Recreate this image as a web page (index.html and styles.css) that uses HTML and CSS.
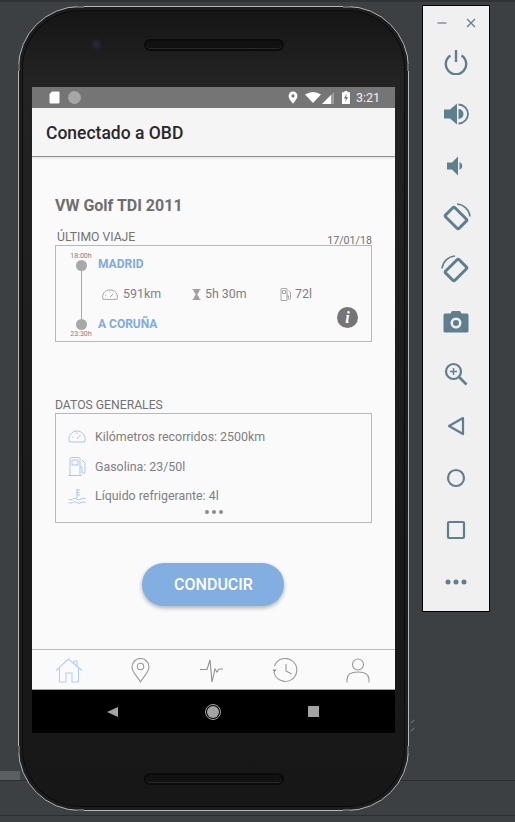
FILE: index.html
```html
<!DOCTYPE html>
<html lang="es">
<head>
  <meta charset="UTF-8">
  <title>Conectado a OBD</title>
  <link rel="stylesheet" href="styles.css">
</head>
<body>
  <div class="phone">
    <span class="tick tick-tl"></span><span class="tick tick-tr"></span>
    <span class="tick tick-sl"></span><span class="tick tick-sr"></span>
    <span class="tick tick-bl"></span><span class="tick tick-br"></span>
    <span class="tick tick-lsl"></span><span class="tick tick-lsr"></span>
    <span class="scratch scratch-a"></span><span class="scratch scratch-b"></span>
    <div class="bezel-top">
      <span class="camera"></span>
      <span class="speaker"></span>
    </div>
    <div class="screen">
      <div class="status-bar">
        <div class="status-left">
          <svg width="11" height="13" viewBox="0 0 11 13"><path d="M3 0.500h6.500a1 1 0 0 1 1 1v10a1 1 0 0 1-1 1h-8a1 1 0 0 1-1-1V3z" fill="#fff"/></svg>
          <span class="status-dot"></span>
        </div>
        <div class="status-right">
          <svg width="10" height="13" viewBox="0 0 10 13"><path fill-rule="evenodd" d="M5 0.500a4.400 4.400 0 0 1 4.400 4.400C9.400 8 5 12.500 5 12.500S0.600 8 0.600 4.900A4.400 4.400 0 0 1 5 0.500zM5 3.300a1.600 1.600 0 1 0 0 3.200a1.600 1.600 0 0 0 0-3.200z" fill="#fff"/></svg>
          <svg class="wifi" width="16" height="11" viewBox="0 0 16 11"><path d="M0 2.500Q8-2.500 16 2.500L8 11z" fill="#fff"/></svg>
          <svg class="signal" width="12" height="12" viewBox="0 0 12 12"><path d="M12 0V12H0z" fill="#9e9e9e"/><path d="M9 3V12H0z" fill="#fff"/></svg>
          <svg class="battery" width="8" height="13" viewBox="0 0 8 13"><path d="M2.500 0h3v1.200h2.500v11.800h-8v-11.800h2.500z" fill="#fff"/><path d="M4.600 2.500L2 7.500h1.800L3.200 11l2.800-5h-1.800z" fill="#757575"/></svg>
          <span class="clock">3:21</span>
        </div>
      </div>
      <header class="app-bar">Conectado a OBD</header>
      <main class="content">
        <h2 class="car-name">VW Golf TDI 2011</h2>

        <div class="section-head head-trip">
          <span class="section-title">ÚLTIMO VIAJE</span>
          <span class="trip-date">17/01/18</span>
        </div>
        <section class="card trip-card">
          <div class="timeline">
            <span class="time">18:00h</span>
            <span class="dot"></span>
            <span class="line"></span>
            <span class="dot"></span>
            <span class="time">23:30h</span>
          </div>
          <div class="trip-body">
            <div class="city">MADRID</div>
            <div class="trip-stats">
              <div class="stat stat-km">
                <svg width="16" height="11" viewBox="0 0 16 11" fill="none" stroke="#9e9e9e" stroke-width="0.900"><path d="M1 10.400A7 7 0 0 1 8 1a7 7 0 0 1 7 9.400z"/><path d="M8 8l3-3"/><path d="M3 6l1 .5M8 2.500v1"/></svg>
                <span>591km</span>
              </div>
              <div class="stat stat-time">
                <svg width="9" height="11" viewBox="0 0 9 11"><path d="M0.500 0h8v1H7.500C7.500 3.500 5.300 4.500 5.300 5.500S7.500 7.500 7.500 10h1v1h-8v-1h1C1.500 7.500 3.700 6.500 3.700 5.500S1.500 3.500 1.500 1h-1z" fill="#a0a0a0"/></svg>
                <span>5h 30m</span>
              </div>
              <div class="stat stat-fuel">
                <svg width="12" height="13" viewBox="0 0 12 13" fill="none" stroke="#9e9e9e" stroke-width="0.900"><path d="M1 12.500V1a.5.5 0 0 1 .5-.5h5A.5.5 0 0 1 7 1v11.500z"/><path d="M2.500 2.500h3v3h-3z"/><path d="M7 8h1.500v2.500a1 1 0 0 0 2 0V4.500L8.500 2.500"/></svg>
                <span>72l</span>
              </div>
            </div>
            <div class="city">A CORUÑA</div>
          </div>
          <span class="info">i</span>
        </section>

        <div class="section-head head-data">
          <span class="section-title">DATOS GENERALES</span>
        </div>
        <section class="card data-card">
          <div class="data-row">
            <svg width="18" height="13" viewBox="0 0 18 13" fill="none" stroke="#a9c7ec" stroke-width="1"><path d="M1.500 12A8 8 0 0 1 9 1a8 8 0 0 1 7.500 11z"/><path d="M9 9l3.500-4"/><path d="M4 7l1 .5M9 2.500v1.500"/></svg>
            <span>Kilómetros recorridos: 2500km</span>
          </div>
          <div class="data-row">
            <svg width="18" height="19" viewBox="0 0 18 19" fill="none" stroke="#a9c7ec" stroke-width="1"><path d="M2 18.500V2a1.500 1.500 0 0 1 1.500-1.500h7A1.500 1.500 0 0 1 12 2v16.500zM0.500 18.500H13.500"/><path d="M4 3h6v5H4z"/><path d="M12 10h2v5a1.500 1.500 0 0 0 3 0V6l-3-3"/></svg>
            <span>Gasolina: 23/50l</span>
          </div>
          <div class="data-row">
            <svg width="18" height="16" viewBox="0 0 18 16" fill="none" stroke="#a9c7ec" stroke-width="1"><path d="M9 0.500v10M9 2h3M9 4.500h2.500M9 7h3"/><path d="M0.500 11q2 2 4 0t4 0t4.500 0t4.500 0"/><path d="M0.500 14.500q2 1.500 4 0t4 0t4.500 0t4.500 0"/></svg>
            <span>Líquido refrigerante: 4l</span>
          </div>
          <div class="more-dots"><i></i><i></i><i></i></div>
        </section>

        <div class="action">
          <button class="drive-button">CONDUCIR</button>
        </div>
      </main>
      <nav class="tabs">
        <svg width="28" height="25" viewBox="0 0 28 25" fill="none" stroke="#b4d0f1" stroke-width="1.100"><path d="M1 12.500L13.500 1 27 12.500"/><path d="M19 6V3h3v6"/><path d="M4.500 10v14H11v-9h6v9h6.500V10"/></svg>
        <svg width="19" height="25" viewBox="0 0 19 25" fill="none" stroke="#9a9a9a" stroke-width="1.100"><path d="M9.500 24C6 18 1 14 1 9a8.500 8.500 0 0 1 17 0C18 14 13 18 9.500 24z"/><circle cx="9.500" cy="8.500" r="3.200"/></svg>
        <svg width="26" height="24" viewBox="0 0 26 24" fill="none" stroke="#8f8f8f" stroke-width="1.100"><path d="M2 10.500h7L12 1l2 22 3-13 2 3 2-3h4"/></svg>
        <svg width="26" height="25" viewBox="0 0 26 25" fill="none" stroke="#9a9a9a" stroke-width="1.100"><path d="M2.500 8A11.500 11.500 0 1 1 2 14"/><path d="M14 6v7l5.500 3"/><path d="M0.500 11.500h4L2.500 14.500z" fill="#8a8a8a" stroke="none"/></svg>
        <svg width="24" height="25" viewBox="0 0 24 25" fill="none" stroke="#9a9a9a" stroke-width="1.100"><circle cx="12" cy="6.500" r="5.500"/><path d="M1 24.500v-3c0-5 4-7.500 11-7.500s11 2.500 11 7.500v3"/></svg>
      </nav>
      <div class="nav-bar">
        <span class="nav-back"></span>
        <span class="nav-home"><i></i></span>
        <span class="nav-square"></span>
      </div>
    </div>
    <div class="bezel-bottom">
      <span class="speaker"></span>
    </div>
  </div>

  <aside class="tool-panel">
    <div class="panel-head">
      <svg width="10" height="10" viewBox="0 0 10 10"><path d="M0.500 5h9" stroke="#5f7f8f" stroke-width="1.200"/></svg>
      <svg width="10" height="10" viewBox="0 0 10 10"><path d="M1 1l8 8M9 1l-8 8" stroke="#5f7f8f" stroke-width="1.200"/></svg>
    </div>
    <div class="tool">
      <svg width="26" height="26" viewBox="0 0 26 26" fill="none" stroke="#5f7f8f" stroke-width="2.400"><path d="M7.500 6.500a10.200 10.200 0 1 0 11 0"/><path d="M13 1v12"/></svg>
    </div>
    <div class="tool">
      <svg width="26" height="24" viewBox="0 0 26 24"><path d="M1 7.500h6L14 1.500v21l-7-6H1z" fill="#5f7f8f"/><path d="M15.500 7a5 5 0 0 1 0 10z" fill="#5f7f8f"/><path d="M15.500 2.500a9.500 9.500 0 0 1 0 19" fill="none" stroke="#5f7f8f" stroke-width="1.800"/></svg>
    </div>
    <div class="tool">
      <svg width="20" height="20" viewBox="0 0 20 20"><path d="M1 6.500h5L12 0.500v19l-6-6H1z" fill="#5f7f8f"/><path d="M13.500 6a4.300 4.300 0 0 1 0 8z" fill="#5f7f8f"/></svg>
    </div>
    <div class="tool">
      <svg width="30" height="30" viewBox="0 0 30 30" fill="none" stroke="#5f7f8f"><rect x="5.500" y="8.500" width="19" height="13" rx="1.500" stroke-width="3" transform="rotate(45 15 15)"/><path d="M16 1a14 14 0 0 1 13 12.500" stroke-width="1.500"/></svg>
    </div>
    <div class="tool">
      <svg width="30" height="30" viewBox="0 0 30 30" fill="none" stroke="#5f7f8f"><rect x="5.500" y="8.500" width="19" height="13" rx="1.500" stroke-width="3" transform="rotate(-45 15 15)"/><path d="M14 1a14 14 0 0 0-13 12.500" stroke-width="1.500"/></svg>
    </div>
    <div class="tool">
      <svg width="26" height="24" viewBox="0 0 26 24"><path fill-rule="evenodd" d="M2 3.500h5.500L9 1h8l1.500 2.500H24a1.500 1.500 0 0 1 1.500 1.500v16a1.500 1.500 0 0 1-1.500 1.500H2A1.500 1.500 0 0 1 .5 21V5A1.500 1.500 0 0 1 2 3.500zM13 7.500a5.500 5.500 0 1 0 0 11a5.500 5.500 0 0 0 0-11zM13 10a3 3 0 1 1 0 6a3 3 0 0 1 0-6z" fill="#5f7f8f"/></svg>
    </div>
    <div class="tool">
      <svg width="24" height="24" viewBox="0 0 24 24" fill="none" stroke="#5f7f8f" stroke-width="2.200"><circle cx="9.500" cy="9.500" r="7.500"/><path d="M15 15l7.500 7.500" stroke-width="2.600"/><path d="M9.500 6v7M6 9.500h7" stroke-width="1.400"/></svg>
    </div>
    <div class="tool">
      <svg width="18" height="20" viewBox="0 0 18 20" fill="none" stroke="#5f7f8f" stroke-width="2.200" stroke-linejoin="round"><path d="M16 2L2 10l14 8z"/></svg>
    </div>
    <div class="tool">
      <svg width="20" height="20" viewBox="0 0 20 20" fill="none" stroke="#5f7f8f" stroke-width="2.200"><circle cx="10" cy="10" r="8"/></svg>
    </div>
    <div class="tool">
      <svg width="20" height="20" viewBox="0 0 20 20" fill="none" stroke="#5f7f8f" stroke-width="2.200"><rect x="2" y="2" width="16" height="16" rx="1"/></svg>
    </div>
    <div class="tool">
      <svg width="22" height="6" viewBox="0 0 22 6" fill="#5f7f8f"><circle cx="3" cy="3" r="2.500"/><circle cx="11" cy="3" r="2.500"/><circle cx="19" cy="3" r="2.500"/></svg>
    </div>
  </aside>
</body>
</html>
```

FILE: styles.css
```css
body {
  margin: 0;
  width: 515px;
  height: 822px;
  overflow: hidden;
  box-sizing: border-box;
  padding: 6px 0 0 18px;
  display: flex;
  align-items: flex-start;
  font-family: Roboto, "Liberation Sans", sans-serif;
  background-color: #3c4043;
  background-image:
    linear-gradient(#2f3336, #2f3336),
    linear-gradient(#5c5f61, #5c5f61),
    linear-gradient(#2b2e30, #2b2e30),
    linear-gradient(#2b2e30, #2b2e30);
  background-repeat: no-repeat;
  background-size: 515px 2px, 20px 9px, 515px 1px, 515px 1px;
  background-position: 0 0, 0 771px, 0 780px, 0 815px;
}

/* telefono */
.phone {
  position: relative;
  width: 391px;
  height: 805px;
  box-sizing: border-box;
  padding: 0 13px;
  display: flex;
  flex-direction: column;
  flex-shrink: 0;
  border-radius: 62px;
  background: linear-gradient(#141414, #232323 9%, #1b1b1b 60%, #171717);
  border: 1px solid #b5b8ba;
  box-shadow: inset 0 0 0 3px #1d1d1d, inset 0 0 0 4px #0c0c0c;
}
.tick {
  position: absolute;
  background: #5e6265;
}
.tick-tl, .tick-tr, .tick-bl, .tick-br {
  width: 7px;
  height: 2px;
}
.tick-sl, .tick-sr, .tick-lsl, .tick-lsr {
  width: 2px;
  height: 7px;
}
.tick-sl, .tick-sr { top: 57px; }
.tick-lsl, .tick-lsr { bottom: 57px; }
.tick-tl { top: -1px; left: 58px; }
.tick-tr { top: -1px; right: 58px; }
.tick-bl { bottom: -1px; left: 58px; }
.tick-br { bottom: -1px; right: 58px; }
.tick-sl, .tick-lsl { left: -1px; }
.tick-sr, .tick-lsr { right: -1px; }
.scratch {
  position: absolute;
  left: 391px;
  width: 5px;
  height: 1px;
  background: #74787a;
  transform: rotate(-45deg);
}
.scratch-a { top: 714px; }
.scratch-b { top: 722px; }

.bezel-top {
  height: 80px;
  flex-shrink: 0;
  display: flex;
  justify-content: center;
  padding-top: 32px;
  box-sizing: border-box;
}
.bezel-bottom {
  flex: 1;
  display: flex;
  justify-content: center;
  padding-top: 40px;
  box-sizing: border-box;
}
.camera {
  position: absolute;
  left: 71px;
  top: 31px;
  width: 13px;
  height: 13px;
  border-radius: 50%;
  background: radial-gradient(circle, #2b2530 20%, #191b20 70%);
}
.speaker {
  width: 140px;
  height: 12px;
  box-sizing: border-box;
  border-radius: 6px;
  background: #111;
  border: 2px solid #0b0b0b;
  box-shadow: inset 0 -1px 0 #2a2a2a;
}

.screen {
  width: 363px;
  height: 646px;
  flex-shrink: 0;
  display: flex;
  flex-direction: column;
  background: #fafafa;
}
.status-bar {
  height: 21px;
  flex-shrink: 0;
  background: #757575;
  display: flex;
  justify-content: space-between;
  align-items: center;
  padding: 0 15px 0 17px;
}
.status-left, .status-right {
  display: flex;
  align-items: center;
}
.status-dot {
  width: 13px;
  height: 13px;
  margin-left: 8px;
  border-radius: 50%;
  background: #a6a6a6;
}
.wifi { margin-left: 7px; }
.signal { margin-left: 1px; }
.battery { margin-left: 8px; }
.clock {
  margin-left: 6px;
  font-size: 12.500px;
  color: #f0f0f0;
}
.app-bar {
  height: 49px;
  flex-shrink: 0;
  box-sizing: border-box;
  padding: 15px 14px 0;
  font-size: 17.500px;
  font-weight: 500;
  line-height: 20px;
  color: #292929;
  background: #f5f5f5;
  border-bottom: 1px solid #8f8f8f;
  box-shadow: 0 1px 2px rgba(0,0,0,0.12);
}

/* contenido */
.content {
  flex: 1;
  padding: 0 23px;
  color: #757575;
}
.car-name {
  margin: 40px 0 0;
  font-size: 16px;
  line-height: 18px;
  font-weight: 700;
  color: #6e6e6e;
}
.section-head {
  display: flex;
  justify-content: space-between;
  align-items: flex-end;
  height: 14px;
  padding: 0 0 0 2px;
}
.head-trip { margin-top: 15px; }
.head-data {
  margin-top: 56px;
  padding-left: 0;
}
.section-title {
  font-size: 12.200px;
  line-height: 14px;
  color: #727272;
}
.trip-date {
  font-size: 10.700px;
  line-height: 12px;
  margin-bottom: -3px;
  color: #727272;
}
.card {
  position: relative;
  box-sizing: border-box;
  width: 317px;
  border: 1px solid #afbcbc;
}
.trip-card {
  height: 97px;
  margin-top: 1px;
  display: flex;
}
.data-card {
  height: 110px;
  margin-top: 1px;
  padding: 8px 12px 0;
}
.timeline {
  width: 50px;
  padding: 6px 0 3px;
  display: flex;
  flex-direction: column;
  align-items: center;
  flex-shrink: 0;
}
.time {
  font-size: 7px;
  line-height: 8px;
  color: #808080;
}
.dot {
  width: 11px;
  height: 11px;
  border-radius: 50%;
  background: #a8a8a8;
  flex-shrink: 0;
}
.line {
  flex: 1;
  width: 1px;
  background: #a8a8a8;
}
.trip-body {
  flex: 1;
  margin-left: -8px;
  padding: 11px 0 10px;
  display: flex;
  flex-direction: column;
  justify-content: space-between;
}
.city {
  font-size: 12px;
  line-height: 14px;
  font-weight: 700;
  color: #7dabe2;
}
.trip-stats {
  display: flex;
  padding-left: 4px;
}
.stat {
  display: flex;
  align-items: center;
  font-size: 12.400px;
  line-height: 14px;
  color: #808080;
}
.stat svg { margin-right: 5px; }
.stat-km { width: 90px; }
.stat-time { width: 88px; }
.stat-time svg { margin-right: 4px; }
.stat-fuel svg { margin-right: 3px; }
.info {
  position: absolute;
  right: 13px;
  bottom: 13px;
  width: 21px;
  height: 21px;
  border-radius: 50%;
  background: #757575;
  color: #fff;
  font: italic 700 16px/21px "Liberation Serif", serif;
  text-align: center;
}
.data-row {
  display: flex;
  align-items: center;
  height: 29.500px;
  font-size: 12.400px;
  color: #808080;
}
.data-row svg {
  width: 18px;
  margin-right: 9px;
  flex-shrink: 0;
}
.more-dots {
  display: flex;
  justify-content: center;
  gap: 3px;
  margin-top: -1px;
}
.more-dots i {
  width: 4px;
  height: 4px;
  border-radius: 50%;
  background: #8c8c8c;
}
.action {
  display: flex;
  justify-content: center;
  margin-top: 40px;
  padding-right: 2px;
}
.drive-button {
  width: 142px;
  height: 43px;
  padding: 0 0 0 2px;
  border: none;
  border-radius: 22px;
  background: #82aee2;
  color: #fff;
  font-family: Roboto, sans-serif;
  font-size: 16px;
  font-weight: 500;
  box-shadow: 0 2px 4px rgba(0,0,0,0.3);
}

/* barra de abajo */
.tabs {
  height: 40px;
  flex-shrink: 0;
  display: flex;
  justify-content: space-between;
  align-items: center;
  box-sizing: border-box;
  padding: 2px 25px 0 23px;
  border-top: 1px solid #bdbdbd;
  background: #fafafa;
}
.nav-bar {
  height: 44px;
  box-sizing: border-box;
  flex-shrink: 0;
  padding-right: 2px;
  display: flex;
  align-items: center;
  justify-content: center;
  background: #000;
  border-top: 1px solid #9e9e9e;
}
.nav-back {
  width: 0;
  height: 0;
  border-style: solid;
  border-width: 5.500px 11px 5.500px 0;
  border-color: transparent #a3a3a3 transparent transparent;
}
.nav-home {
  width: 16px;
  height: 16px;
  margin: 0 87px;
  padding: 1px;
  box-sizing: border-box;
  border: 1px solid #a3a3a3;
  border-radius: 50%;
  display: flex;
}
.nav-home i {
  flex: 1;
  border-radius: 50%;
  background: #a3a3a3;
}
.nav-square {
  width: 11px;
  height: 11px;
  background: #a3a3a3;
}

/* panel lateral */
.tool-panel {
  width: 68px;
  height: 607px;
  box-sizing: border-box;
  margin: -1px 0 0 13px;
  flex-shrink: 0;
  border: 1px solid #000;
  background: #f0f0f0;
}
.panel-head {
  height: 30px;
  box-sizing: border-box;
  padding-top: 3px;
  display: flex;
  justify-content: center;
  align-items: center;
  gap: 19px;
}
.tool {
  height: 52px;
  display: flex;
  justify-content: center;
  align-items: center;
}
```
